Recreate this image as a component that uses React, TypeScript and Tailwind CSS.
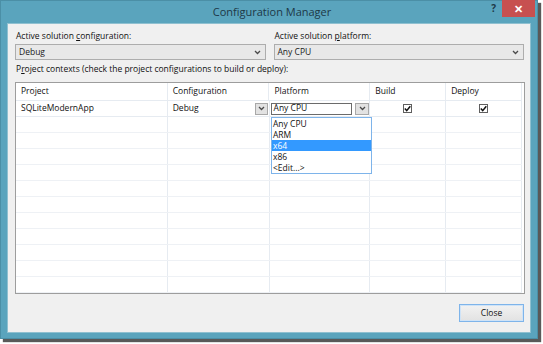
import React from "react";

const font = { fontFamily: '"Open Sans", "Noto Sans", Arial, sans-serif' };

function Chevron() {
  return (
    <svg width="7" height="5" viewBox="0 0 7 5">
      <path d="M1 1 L3.5 3.5 L6 1" fill="none" stroke="#4a4a4a" strokeWidth="1.3" />
    </svg>
  );
}

function Check() {
  return (
    <div className="w-[9px] h-[9px] border border-[#5f5f5f] bg-white flex items-center justify-center">
      <svg width="7" height="7" viewBox="0 0 7 7">
        <path d="M0.8 3.6 L2.7 5.6 L6.3 1.2" fill="none" stroke="#111" strokeWidth="1.5" />
      </svg>
    </div>
  );
}

function Combo({ value }: { value: string }) {
  return (
    <div className="h-[16px] border border-[#adadad] bg-[#e8e8e8] flex items-center justify-between pl-[3px] pr-[4px] text-[8.5px] text-[#1a1a1a]">
      <span>{value}</span>
      <Chevron />
    </div>
  );
}

const cols = ["w-[152px]", "w-[102px]", "w-[101px]", "w-[76px]", "w-[76px]"];

export default function App() {
  const emptyRows = Array.from({ length: 11 });
  return (
    <div className="w-[543px] h-[344px] bg-white" style={font}>
      <div className="w-[538px] h-[339px] bg-[#5aa4bd] border border-[#4b8fa6] flex flex-col shadow-[3px_3px_1px_rgba(60,60,60,0.85)]">
        <div className="h-[22px] relative flex items-center justify-center">
          <span className="text-[11px] text-[#1d3847] pl-[6px]">Configuration Manager</span>
          <div className="absolute right-[2px] top-[-1px] flex items-start">
            <span className="text-[10px] font-bold text-[#1d3847] mr-[6px] mt-[1px]">?</span>
            <div className="w-[33px] h-[17px] bg-[#c75050] flex items-center justify-center text-white text-[11px] font-bold leading-none">✕</div>
          </div>
        </div>
        <div className="flex-1 mx-[6px] mb-[5px] bg-[#f0f0f0] border border-[#8fc0d0] pl-[7px] pr-[6px] pt-[6px] flex flex-col text-[8.5px] text-[#111]">
          <div className="flex gap-[8px]">
            <div className="flex-1 flex flex-col gap-[2px]">
              <span className="h-[12px] leading-[12px] pl-[1px]">Active solution <u>c</u>onfiguration:</span>
              <Combo value="Debug" />
            </div>
            <div className="flex-1 flex flex-col gap-[2px]">
              <span className="h-[12px] leading-[12px] pl-[1px]">Active solution <u>p</u>latform:</span>
              <Combo value="Any CPU" />
            </div>
          </div>
          <span className="mt-[3px] h-[12px] leading-[12px] pl-[1px]">P<u>r</u>oject contexts (check the project configurations to build or deploy):</span>
          <div className="mt-[7px] w-[510px] border border-[#9d9d9d] bg-white relative pr-[2px]">
            <div className="flex h-[18px] border-b border-[#e6ebf1]">
              {["Project", "Configuration", "Platform", "Build", "Deploy"].map((h, i) => (
                <div key={h} className={`${cols[i]} border-r border-[#e6ebf1] flex items-center pl-[5px]`}>{h}</div>
              ))}
            </div>
            <div className="flex h-[16px] border-b border-[#e6ebf1]">
              <div className={`${cols[0]} border-r border-[#e6ebf1] flex items-center pl-[5px]`}>SQLiteModernApp</div>
              <div className={`${cols[1]} border-r border-[#e6ebf1] flex items-center justify-between pl-[5px] pr-[1px]`}>
                <span>Debug</span>
                <div className="w-[13px] h-[12px] bg-[#e2e2e2] border border-[#a8a8a8] flex items-center justify-center"><Chevron /></div>
              </div>
              <div className={`${cols[2]} border-r border-[#e6ebf1] flex items-center justify-between pl-[1px] pr-[0px]`}>
                <div className="w-[81px] h-[12px] border border-[#6b6b6b] bg-white flex items-center pl-[2px]">Any CPU</div>
                <div className="w-[14px] h-[12px] bg-[#e2e2e2] border border-[#a8a8a8] flex items-center justify-center"><Chevron /></div>
              </div>
              <div className={`${cols[3]} border-r border-[#e6ebf1] flex items-center justify-center`}><Check /></div>
              <div className={`${cols[4]} border-r border-[#e6ebf1] flex items-center justify-center`}><Check /></div>
            </div>
            {emptyRows.map((_, r) => (
              <div key={r} className="flex h-[16px] border-b border-[#eef1f5]">
                {cols.map((c, i) => (
                  <div key={i} className={`${c} border-r border-[#e6ebf1]`} />
                ))}
              </div>
            ))}
            <div className="absolute left-[255px] top-[34px] w-[101px] border border-[#7eb4ea] bg-white flex flex-col">
              <span className="h-[11px] leading-[11px] pl-[1px]">Any CPU</span>
              <span className="h-[11px] leading-[11px] pl-[1px]">ARM</span>
              <span className="h-[11px] leading-[11px] pl-[1px] bg-[#3399ff] text-white">x64</span>
              <span className="h-[11px] leading-[11px] pl-[1px]">x86</span>
              <span className="h-[11px] leading-[11px] pl-[1px]">&lt;Edit...&gt;</span>
            </div>
          </div>
          <div className="mt-[10px] flex justify-end">
            <div className="w-[65px] h-[18px] border border-[#7eb4ea] bg-gradient-to-b from-[#f2f2f2] to-[#e2e2e2] flex items-center justify-center shadow-[inset_0_0_0_1px_#cfe3f7]">Close</div>
          </div>
        </div>
      </div>
    </div>
  );
}
